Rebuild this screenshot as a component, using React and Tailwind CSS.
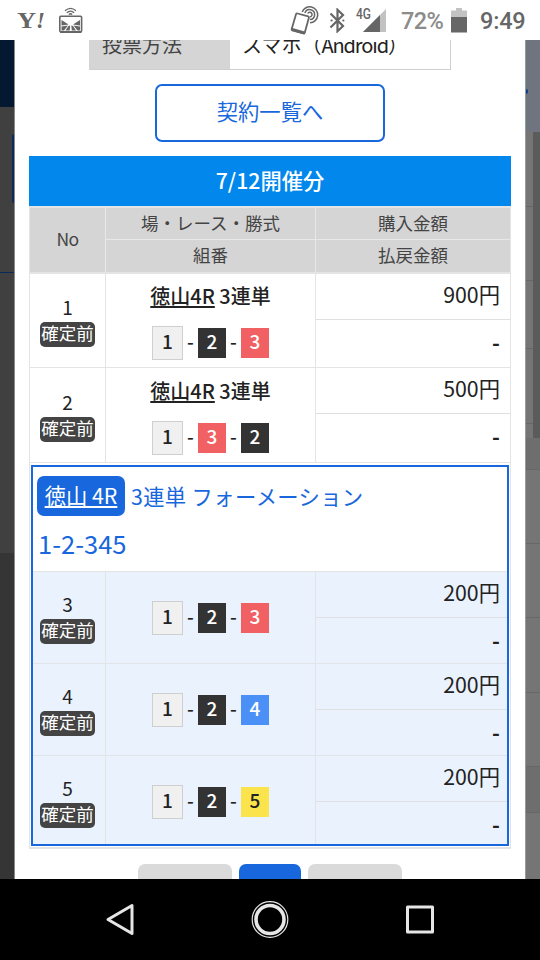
import React from 'react';
import clsx from 'clsx';

const chipStyles = {
    1: 'w-[31px] h-[34px] bg-[#f0f0f0] border-[1.500px] border-[#cfcfcf] text-[#222] leading-[28px]',
    2: 'w-[28px] h-[30px] bg-[#333] text-white leading-[26px]',
    3: 'w-[28px] h-[30px] bg-[#f16063] text-white leading-[26px]',
    4: 'w-[28px] h-[30px] bg-[#4a90f7] text-white leading-[26px]',
    5: 'w-[28px] h-[30px] bg-[#fae34b] text-[#222] leading-[26px]',
};

const singleBets = [
    { no: 1, numbers: [1, 2, 3], amount: '900円', height: 'h-[94px]' },
    { no: 2, numbers: [1, 3, 2], amount: '500円', height: 'h-[95px]' },
];

const formationBets = [
    { no: 3, numbers: [1, 2, 3], amount: '200円', height: 'h-[92px]' },
    { no: 4, numbers: [1, 2, 4], amount: '200円', height: 'h-[92px]' },
    { no: 5, numbers: [1, 2, 5], amount: '200円', height: 'h-[88px]' },
];

const StatusBar = () => (
    <header className="h-10 shrink-0 bg-white flex items-start text-[#666] font-['Roboto',sans-serif]">
        <div className="ml-[17px] mt-[10px] w-[28px] h-[22px] flex font-['Liberation_Serif',serif] text-[23px] leading-[22px]">
            <span className="w-[18px] origin-left scale-x-[1.15] font-bold">Y</span>
            <span className="ml-[2px] italic font-bold">!</span>
        </div>
        <svg className="ml-[13px] mt-[7px]" width="25" height="27" viewBox="0 0 25 27" fill="none" stroke="#666">
            <path d="M7 3.8Q12.5-1.2 18 3.8M8.8 5.8Q12.5 2.4 16.2 5.8M10.8 7.5Q12.5 6 14.2 7.5" strokeWidth="1.2" />
            <rect x="1.8" y="9.3" width="21.8" height="15.4" rx="1" strokeWidth="1.6" />
            <path d="M3.500 13L10.500 17.500L3.500 18.500ZM22 13L15 17.500L22 18.500ZM3.500 19.500L10 18.500L6 23.500H3.500ZM22 19.500L15.500 18.500L19.500 23.500H22ZM10.500 19L7.500 23.500H11.700L12.200 18.500ZM15 19L18 23.500H13.800L13.300 18.500Z" fill="#666" stroke="none" />
            <path d="M2 25H23.500" strokeWidth="2" />
        </svg>
        <svg className="ml-[207px] mt-[5px]" width="30" height="31" viewBox="0 0 30 31" fill="none" stroke="#666">
            <path d="M7.500 8.500L18.200 11.300Q19.200 11.600 18.900 12.700L14.800 27.500Q14.500 28.600 13.400 28.300L2.500 25.300Q1.400 25 1.700 23.900L6 9.300Q6.400 8.200 7.500 8.500Z" strokeWidth="1.8" />
            <path d="M2.300 23.800L14.600 27.200L14 28.700L2 25.300Z" fill="#666" strokeWidth="1.5" />
            <path d="M12.200 7A8 8 0 1 1 20 17.800" strokeWidth="1.5" />
            <path d="M14.900 8A5 5 0 1 1 20 14.600" strokeWidth="1.5" />
            <path d="M17.700 8.500A2.300 2.300 0 1 1 20 11.800" strokeWidth="1.5" />
        </svg>
        <svg className="ml-[9px] mt-[8px]" width="17" height="25" viewBox="0 0 17 25" fill="none" stroke="#666" strokeWidth="2.200">
            <path d="M1.500 5.500L14 18L8.500 23.200V1.800L14 7L1.500 19.500" />
            <path d="M2.500 12.500h.1M14.300 12.500h.1" strokeLinecap="round" />
        </svg>
        <div className="ml-[10px] mt-[6px] w-[16px] h-[16px] text-[15px] leading-[16px] font-medium">
            <span className="inline-block origin-left scale-x-[0.8]">4G</span>
        </div>
        <svg className="-ml-[10px] mt-[8px]" width="24" height="24" viewBox="0 0 24 24">
            <path d="M24 1V24H1Z" fill="#c2c2c2" />
            <path d="M18 7V24H1Z" fill="#666" />
        </svg>
        <span className="ml-[15px] mt-[8px] w-[43px] text-[23.500px] leading-[27px] tracking-[-0.600px] font-medium text-[#8c8c8c] whitespace-nowrap">72%</span>
        <svg className="ml-[7px] mt-[8px]" width="16" height="25" viewBox="0 0 16 25">
            <path d="M5 0H11V2.500H16V9H0V2.500H5Z" fill="#c2c2c2" />
            <rect y="9" width="16" height="15.500" fill="#666" />
        </svg>
        <span className="ml-[13px] mt-[8px] text-[23.500px] leading-[27px] tracking-[-0.200px] font-medium whitespace-nowrap">9:49</span>
    </header>
);

const NumberCell = ({ no, className }) => (
    <div className={clsx('shrink-0 border-r border-[#e4e4e4] flex flex-col items-center', className)}>
        <span className="h-7 text-[19px] leading-[25px]">{no}</span>
        <span className="w-[55px] h-[25px] shrink-0 rounded-[5px] bg-[#444] text-white text-[17.500px] leading-[22px] text-center whitespace-nowrap">確定前</span>
    </div>
);

const Chips = ({ numbers }) => (
    <div className="h-[34px] pl-[46px] flex items-center text-[19px] font-medium text-center">
        {numbers.map((n, i) => (
            <React.Fragment key={n}>
                {i > 0 && <span className="w-[15px] h-[30px] leading-[26px]">-</span>}
                <span className={chipStyles[n]}>{n}</span>
            </React.Fragment>
        ))}
    </div>
);

const AmountCell = ({ amount, className }) => (
    <div className="flex-1 flex flex-col text-right text-[21.300px]">
        <div className={clsx('h-[46px] shrink-0 border-b border-[#e0e0e0] leading-[40px]', className)}>{amount}</div>
        <div className={clsx('flex-1 leading-[43px] font-bold', className)}>-</div>
    </div>
);

const BetRow = ({ bet }) => (
    <div className={clsx('flex border-b border-[#e4e4e4]', bet.height)}>
        <NumberCell no={bet.no} className="w-[76px] justify-center" />
        <div className="w-[210px] shrink-0 border-r border-[#e4e4e4] flex flex-col justify-end pb-[7px]">
            <div className="h-[52px] text-center text-[20px] leading-[44px] font-medium">
                <span className="underline underline-offset-[2px] decoration-[1.500px]">徳山4R</span> 3連単
            </div>
            <Chips numbers={bet.numbers} />
        </div>
        <AmountCell amount={bet.amount} className="pr-[10px]" />
    </div>
);

const FormationRow = ({ bet }) => (
    <div className={clsx('flex bg-[#eaf2fe] border-b border-[#e1e4e9] last:border-b-0', bet.height)}>
        <NumberCell no={bet.no} className="w-[73px] pt-[19px] pr-[3px]" />
        <div className="w-[210px] shrink-0 border-r border-[#e4e4e4] pt-[29px]">
            <Chips numbers={bet.numbers} />
        </div>
        <AmountCell amount={bet.amount} className="pr-[7px]" />
    </div>
);

const TableHead = () => (
    <div className="h-[68px] flex bg-[#d5d5d5] border-t-2 border-b-2 border-[#e4e4e4] text-[#444] text-[17.500px] text-center">
        <div className="w-[76px] border-r border-[#e8e8e8] leading-[61px] tracking-[-0.600px]">No</div>
        <div className="w-[210px] border-r border-[#e8e8e8] leading-[29px]">
            <div className="h-[32px] border-b border-[#e8e8e8]">場・レース・勝式</div>
            <div>組番</div>
        </div>
        <div className="flex-1 leading-[29px]">
            <div className="h-[32px] border-b border-[#e8e8e8]">購入金額</div>
            <div>払戻金額</div>
        </div>
    </div>
);

// dimmed page that shows on both sides of the dialog
const LeftBackdrop = () => (
    <div className="w-[15px] shrink-0 flex flex-col items-end bg-[#404040] border-r border-[#8a8a8a]">
        <div className="w-full h-[67px] bg-[#051832]" />
        <div className="mt-[27px] w-[2px] h-[69px] rounded-l bg-[#0c2a57]" />
        <div className="mt-[69px] w-full h-px bg-[#0c2a57]" />
        <div className="mt-[280px] w-full flex-1 bg-[#353535]" />
    </div>
);

const RightBackdrop = () => (
    <div className="w-[15px] shrink-0 flex flex-col bg-[#757575] border-l border-[#999]">
        <div className="h-[92px] bg-[#70747e] pt-[49px]">
            <div className="w-[2px] h-[5px] rounded-r bg-[#0d3f8f]" />
        </div>
        <div className="h-[306px] flex">
            <div className="flex-1">
                <div className="h-[75px] border-b border-[#676767]" />
                <div className="h-[74px] border-b border-[#676767]" />
                <div className="h-[68px] border-b border-[#676767]" />
                <div className="h-[75px] border-b border-[#676767]" />
            </div>
            <div className="w-[7px] bg-[#5b5b5b]" />
        </div>
        <div className="h-[32px] bg-[#6e6e6e] border-b border-[#676767]" />
        <div className="h-[74px] border-b border-[#676767]" />
        <div className="h-[74px] border-b border-[#676767]" />
        <div className="h-[75px] border-b border-[#676767]" />
        <div className="h-[74px] border-b border-[#676767]" />
        <div className="h-[46px] bg-[#6e6e6e] border-b border-[#676767]" />
    </div>
);

const NavBar = () => (
    <nav className="h-[81px] shrink-0 bg-black flex items-center justify-center gap-[110px]">
        <svg width="40" height="40" viewBox="0 0 40 40" fill="none" stroke="#e6e6e6" strokeWidth="3" strokeLinejoin="round">
            <path d="M32 5.500V33.500L8 19.500Z" />
        </svg>
        <svg width="40" height="40" viewBox="0 0 40 40" fill="none" stroke="#e6e6e6">
            <circle cx="20" cy="19.500" r="17.800" strokeWidth="1.200" />
            <circle cx="20" cy="19.500" r="14" strokeWidth="3.600" />
        </svg>
        <svg width="40" height="40" viewBox="0 0 40 40" fill="none" stroke="#e6e6e6" strokeWidth="3" strokeLinejoin="round">
            <rect x="7.500" y="7" width="25" height="25" />
        </svg>
    </nav>
);

const App = () => (
    <div className="w-[540px] h-[960px] overflow-hidden flex flex-col bg-white text-[#222] font-['Noto_Sans_CJK_JP',sans-serif]">
        <StatusBar />
        <main className="h-[839px] shrink-0 overflow-hidden flex">
            <LeftBackdrop />
            <section className="w-[510px] shrink-0 flex flex-col bg-white">
                <div className="ml-[74px] w-[362px] h-[30px] shrink-0 overflow-hidden flex border-b-[1.500px] border-r-[1.500px] border-[#cfcfcf] text-[20px] leading-[9px] whitespace-nowrap">
                    <div className="w-[141px] shrink-0 bg-[#d5d5d5] pl-[13px] text-[#444]">投票方法</div>
                    <div className="pl-[12px]">
                        スマホ（<span className="tracking-[-1.100px]">Android</span>）
                    </div>
                </div>

                <button className="ml-[140px] mt-[14px] w-[230px] h-[58px] shrink-0 rounded-[7px] border-2 border-[#1867dc] text-[#1867dc] text-[21.300px] pb-[5px] leading-[48px]">
                    契約一覧へ
                </button>

                <div className="ml-[14px] mt-[14px] w-[482px] shrink-0">
                    <h2 className="h-[50px] bg-[#0288ec] text-white text-center text-[21.300px] leading-[47px] font-medium">7/12開催分</h2>
                    <div className="border-x border-b-2 border-[#e4e4e4]">
                        <TableHead />
                        {singleBets.map((bet) => (
                            <BetRow key={bet.no} bet={bet} />
                        ))}
                        <div className="mx-px mt-[2px] mb-px border-2 border-[#1867dc]">
                            <div className="h-[105px] border-b border-[#e4e4e4] pl-[4px] pt-[9px] text-[#1867dc]">
                                <div className="flex items-center text-[21.300px] leading-[38px] whitespace-nowrap">
                                    <span className="w-[88px] h-[40px] rounded-[7px] bg-[#1867dc] text-white text-center leading-[38px]">
                                        <span className="underline underline-offset-[2px] decoration-[1.500px]">徳山 4R</span>
                                    </span>
                                    <span className="ml-[6px] tracking-[0.350px]">3連単 フォーメーション</span>
                                </div>
                                <p className="pl-px text-[25.500px] leading-[54px]">1-2-345</p>
                            </div>
                            {formationBets.map((bet) => (
                                <FormationRow key={bet.no} bet={bet} />
                            ))}
                        </div>
                    </div>
                </div>

                <div className="mt-[15px] pl-[123px] h-[16px] shrink-0 overflow-hidden flex gap-[7px]">
                    <div className="w-[94px] h-[50px] rounded-[7px] bg-[#dadada]" />
                    <div className="w-[62px] h-[50px] rounded-[7px] bg-[#1867dc]" />
                    <div className="w-[94px] h-[50px] rounded-[7px] bg-[#dadada]" />
                </div>
            </section>
            <RightBackdrop />
        </main>
        <NavBar />
    </div>
);

export default App;
